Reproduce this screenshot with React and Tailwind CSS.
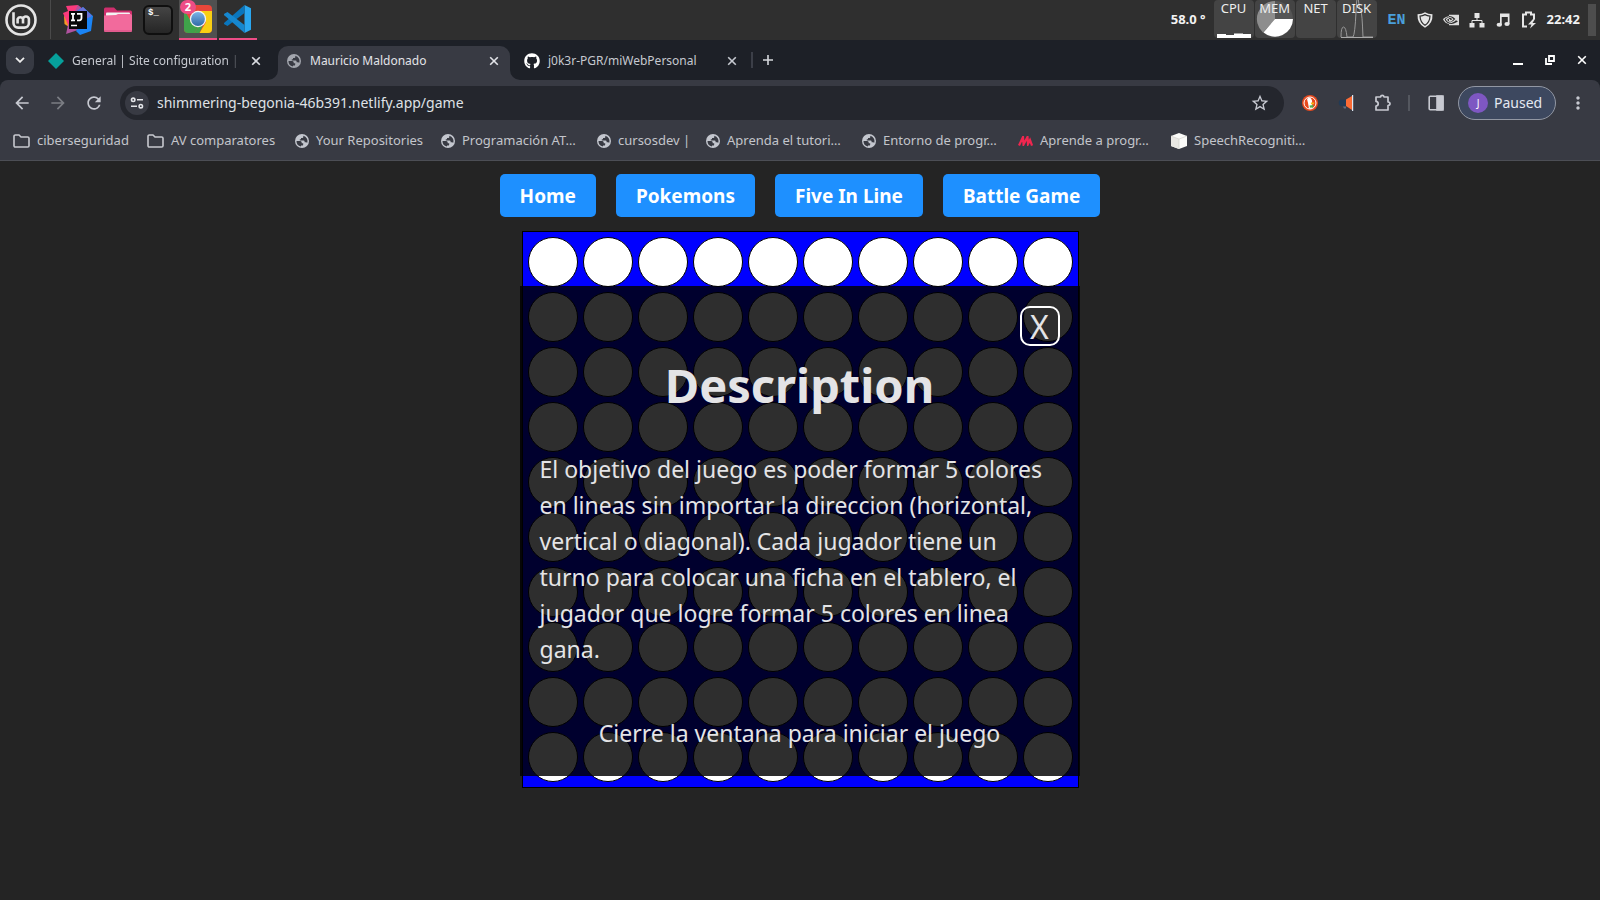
import { MdStarBorder, MdRefresh, MdArrowBack, MdArrowForward, MdMoreVert } from 'react-icons/md';
import { FaGithub } from 'react-icons/fa';
import { SiNvidia } from 'react-icons/si';

function MintLogo() {
  return (
    <svg viewBox="0 0 32 32" className="size-8" fill="none" stroke="#e4e4e4" strokeLinecap="butt">
      <circle cx="16" cy="16" r="14.5" strokeWidth="2.6" />
      <path d="M8.5 8.2V19a4.6 4.6 0 0 0 4.6 4.6h6.2a4.6 4.6 0 0 0 4.6-4.6v-4a3 3 0 0 0-5.9 0v4.6M18 15a3 3 0 0 0-5.4 0v4.6" strokeWidth="2.6" />
    </svg>
  );
}

function IntelliJLogo() {
  return (
    <svg viewBox="0 0 30 30" className="size-[30px]">
      <path d="M1 11 6 13 6 22 1.500 19z" fill="#f59a23" />
      <path d="M3 1 15 0 14 8 5 20 0 8 5 6z" fill="#fb3a7c" />
      <path d="M15 0 20 4 18 24 3 29 5 20 12 6z" fill="#b0529f" />
      <path d="M20 2 30 11 28 26 17 30 13 26 22 14 14 6z" fill="#1a84f5" />
      <path d="M20 2 14 7 23 14 29 11z" fill="#6b71d6" />
      <rect x="6" y="6" width="18" height="18" fill="#080808" />
      <path d="M8 8.800h4M10 8.800v6.500M8 15.300h4M14 8.800h4.500v4.300q0 2.200-2.200 2.200H14" stroke="#fff" strokeWidth="1.800" fill="none" />
      <path d="M8 20.500h6" stroke="#fff" strokeWidth="1.500" />
    </svg>
  );
}

function FilesLogo() {
  return (
    <svg viewBox="0 0 28 26" className="h-[26px] w-7">
      <path d="M0 2a1.500 1.500 0 0 1 1.500-1.500H10l3 3h13.500A1.500 1.500 0 0 1 28 5v9H0z" fill="#cf2f6d" />
      <rect x="2" y="5.500" width="24" height="4" rx="1" fill="#f4f4f4" />
      <path d="M0 8.500 12 8l2-1h12.500A1.500 1.500 0 0 1 28 8.500v15a1.500 1.500 0 0 1-1.500 1.500h-25A1.500 1.500 0 0 1 0 23.500z" fill="#f26a9c" />
      <path d="M0 24h28" stroke="#d14f80" strokeWidth="1" />
    </svg>
  );
}

function ChromeLogo() {
  return (
    <svg viewBox="0 0 30 30" className="size-[30px]">
      <defs>
        <clipPath id="chromeTile"><rect x="1" y="1" width="28" height="28" rx="4" /></clipPath>
        <linearGradient id="chromeCore" x1="0" y1="0" x2="0" y2="1">
          <stop offset="0" stopColor="#7db3e6" /><stop offset="1" stopColor="#2f6aa8" />
        </linearGradient>
      </defs>
      <g clipPath="url(#chromeTile)">
        <rect width="30" height="30" fill="#e8473a" />
        <path d="M0 4 9 19 15 23 11 30H0z" fill="#3fa34a" />
        <path d="M15 7h15v23H16l7-12z" fill="#f9cf13" />
        <path d="M11 30 15 23 20 21 16 30z" fill="#3fa34a" />
      </g>
      <circle cx="15" cy="15" r="8.200" fill="#f4f4f4" />
      <circle cx="15" cy="15" r="6.900" fill="url(#chromeCore)" />
    </svg>
  );
}

function CodeLogo() {
  return (
    <svg viewBox="0 0 28 28" className="size-7">
      <path d="M20.500 0 27 3.200v21.600L20.500 28z" fill="#2aa7f0" />
      <path d="M20.500 0v8L3.500 21 .3 19.300q-.7-.8 0-1.600z" fill="#0a76bd" />
      <path d="M20.500 28v-8L3.500 7 .3 8.700q-.7.800 0 1.600z" fill="#1687cf" />
    </svg>
  );
}

function TerminalLogo() {
  return (
    <span className="flex size-[30px] rounded-md border-2 border-[#0f0f0f] bg-linear-to-b from-[#454545] to-[#262626] pl-[3px] font-mono text-[9px] leading-[13px] font-bold text-white">
      $_
    </span>
  );
}

function ShieldIcon() {
  return (
    <svg viewBox="0 0 16 16" className="size-4" fill="none">
      <path d="M8 .3q3 1.800 7.500 2Q16 12 8 15.700 0 12 .5 2.300q4.500-.2 7.500-2z" fill="#e6e6e6" />
      <path d="M8 2.600q2.300 1.200 5 1.500-.2 6.400-5 9.200Q3.200 10.500 3 4.100q2.700-.3 5-1.500z" stroke="#2f2f2f" strokeWidth="1.200" />
    </svg>
  );
}

function NetworkIcon() {
  return (
    <svg viewBox="0 0 16 16" className="size-4" fill="#e6e6e6">
      <path d="M5.500 1h5v5h-5zM.500 11h5v4.500h-5zM10.500 11h5v4.500h-5z" />
      <path d="M8 5v3.500M3 12V8.500h10V12" stroke="#e6e6e6" fill="none" />
    </svg>
  );
}

function MusicIcon() {
  return (
    <svg viewBox="0 0 16 16" className="size-4" fill="#e6e6e6">
      <path d="M5 1.500h9.500V12h-1.700V5H6.700v8H5z" />
      <ellipse cx="4.300" cy="12.800" rx="2.700" ry="2" />
      <ellipse cx="12" cy="12" rx="2.600" ry="2" />
    </svg>
  );
}

function BatteryIcon() {
  return (
    <svg viewBox="0 0 16 18" className="h-[18px] w-4" fill="none">
      <path d="M6 15.500H2V3.500h3V1.500h5v2h3V8" stroke="#e6e6e6" strokeWidth="2" />
      <path d="M12 8 7 13.500h3.500L9 17.500l6-5.500h-3.500L14 8z" fill="#e6e6e6" />
    </svg>
  );
}

function Cross({ className }) {
  return (
    <svg viewBox="0 0 10 10" className={className} stroke="currentColor" strokeWidth="1.600">
      <path d="M1.200 1.200l7.600 7.600M8.800 1.200 1.200 8.800" />
    </svg>
  );
}

function FolderIcon() {
  return (
    <svg viewBox="0 0 17 14" className="h-3.5 w-[17px] shrink-0" fill="none" stroke="#c7c9cf" strokeWidth="1.600">
      <path d="M1 2.300A1.300 1.300 0 0 1 2.300 1H6l2 2h6.700A1.300 1.300 0 0 1 16 4.300v7.400a1.300 1.300 0 0 1-1.300 1.300H2.300A1.300 1.300 0 0 1 1 11.700z" />
    </svg>
  );
}

function GlobeIcon({ color }) {
  return (
    <svg viewBox="0 0 14 14" className="size-3.5 shrink-0">
      <circle cx="7" cy="7" r="7" fill={color} />
      <path d="M1.500 7h3.700q1.500 0 1.500 1.500v.7h1.500v1.200q0 1.200-1.500 1.200H6v.9A5.500 5.500 0 0 1 1.500 7z" fill="#383a43" />
      <path d="M8.300 1.700V3q0 1-1 1H6v1.200H4.800V6.500h3.800q1 0 1 1v.8h1.500q.8 0 1 .7A5.500 5.500 0 0 0 8.300 1.700z" fill="#383a43" />
    </svg>
  );
}

const Globe = () => <GlobeIcon color="#c3c6ce" />;

function MoureIcon() {
  return (
    <svg viewBox="0 0 15 10" className="h-2.5 w-[15px] shrink-0" fill="none" stroke="#f0264f" strokeWidth="2.200">
      <path d="M1 9.500 5 1l.5 7.500L9.500 1l.5 7L12 4l2 5.500" />
    </svg>
  );
}

function CubeIcon() {
  return (
    <svg viewBox="0 0 16 16" className="size-4 shrink-0">
      <path d="M8 0 16 3v10l-8 3-8-3V3z" fill="#fbfbf9" />
      <path d="M8 6v10l-8-3V3z" fill="#e9e8e4" />
      <path d="M0 3l8 3 8-3M8 6v10" stroke="#cfcdc8" strokeWidth=".6" fill="none" />
    </svg>
  );
}

const bookmarks = [
  { label: 'ciberseguridad', icon: FolderIcon, width: 'w-[134px]' },
  { label: 'AV comparatores', icon: FolderIcon, width: 'w-[148px]' },
  { label: 'Your Repositories', icon: Globe, width: 'w-[146px]' },
  { label: 'Programación AT…', icon: Globe, width: 'w-[156px]' },
  { label: 'cursosdev |', icon: Globe, width: 'w-[109px]' },
  { label: 'Aprenda el tutori…', icon: Globe, width: 'w-[156px]' },
  { label: 'Entorno de progr…', icon: Globe, width: 'w-[156px]' },
  { label: 'Aprende a progr…', icon: MoureIcon, width: 'w-[153px]' },
  { label: 'SpeechRecogniti…', icon: CubeIcon, width: 'w-[140px]' },
];

function Monitor({ label, children }) {
  return (
    <div className="relative flex h-[38px] w-10 justify-center rounded-sm bg-[#444444]">
      <svg viewBox="0 0 40 38" className="absolute inset-0 h-[38px] w-10">{children}</svg>
      <span className="relative text-[13px] leading-4 text-[#eeeeee]">{label}</span>
    </div>
  );
}

function Taskbar() {
  return (
    <header className="flex h-10 items-stretch bg-[#2f2f2f] font-['Noto_Sans',sans-serif]">
      <button aria-label="Menu" className="ml-[5px] flex items-center"><MintLogo /></button>
      <div className="mb-px ml-[13px] w-px bg-[#4a4a4a]" />
      <div className="ml-2 flex gap-0.5">
        <button aria-label="IntelliJ IDEA" className="flex w-[38px] items-center justify-center"><IntelliJLogo /></button>
        <button aria-label="Files" className="flex w-[38px] items-center justify-center"><FilesLogo /></button>
        <button aria-label="Terminal" className="flex w-[38px] items-center justify-center"><TerminalLogo /></button>
        <button aria-label="Chrome" className="relative flex w-[38px] items-center justify-center border-b-2 border-[#ee4d86] bg-[#505050]">
          <ChromeLogo />
          <span className="absolute top-0 left-px h-3.5 w-4 rounded-full bg-[#ee4d86] text-center text-[11px] leading-3.5 font-bold text-white">2</span>
        </button>
        <button aria-label="Code" className="flex w-[38px] items-center justify-center border-b-2 border-[#ee4d86]"><CodeLogo /></button>
      </div>
      <div className="ml-auto flex items-center">
        <span className="mr-2 text-[13px] font-bold text-[#f2f2f2]">58.0 °</span>
        <div className="flex gap-px self-start">
          <Monitor label="CPU"><path d="M3 34h9v1h8v-1.500h9V34h8v4H3z" fill="#fff" /></Monitor>
          <Monitor label="MEM">
            <circle cx="20" cy="19" r="18" fill="#555" />
            <path d="M20 19V1A18 18 0 0 0 8 32.500z" fill="#8d8d8d" />
            <path d="M20 19H38A18 18 0 0 1 8.500 32.500z" fill="#fff" />
          </Monitor>
          <Monitor label="NET" />
          <Monitor label="DISK">
            <path d="M4 37Q4 27 6.500 27T10 37h6Q18 34 19 12T21.500 1 24 12 26 37h10" fill="none" stroke="#999" />
            <path d="M4 38h32" stroke="#aaa" strokeWidth="2" />
          </Monitor>
        </div>
        <span className="mx-[11px] pt-0.5 font-['Liberation_Mono',monospace] text-[15px] font-bold text-[#4a9fdb]">EN</span>
        <div className="flex items-center gap-2.5">
          <ShieldIcon />
          <SiNvidia className="size-4 text-[#dcdcdc]" />
          <NetworkIcon />
          <MusicIcon />
          <BatteryIcon />
        </div>
        <time className="ml-2.5 text-[13px] font-bold text-[#f2f2f2]">22:42</time>
        <div className="mr-1 ml-2 h-8 w-2 bg-[#4d4d4d]" />
      </div>
    </header>
  );
}

function TabStrip() {
  return (
    <div className="flex h-10 items-end bg-[#1d2027] text-[12px] text-[#c6c9d0]">
      <button aria-label="Search tabs" className="mb-1.5 ml-1.5 flex size-7 shrink-0 items-center justify-center rounded-[9px] bg-[#373a43]">
        <svg viewBox="0 0 10 6" className="h-1.5 w-2.5" fill="none" stroke="#eee" strokeWidth="1.800"><path d="M1 .8 5 4.800 9 .8" /></svg>
      </button>
      <div className="flex h-[34px] w-[244px] items-center pt-1 pb-2 pl-3.5">
        <svg viewBox="0 0 16 16" className="size-4 shrink-0"><path d="M8 0l8 8-8 8-8-8z" fill="#06a09b" /></svg>
        <span className="ml-2 w-[168px] mask-r-from-92% whitespace-nowrap">General | Site configuration |</span>
        <button aria-label="Close tab" className="ml-[11px]"><Cross className="size-2.5 text-[#d8dae0]" /></button>
      </div>
      <div className="relative flex h-[34px] w-[232px] items-center rounded-t-[10px] bg-[#383a43] pt-1 pb-2 pl-[9px] text-[#e2e3e8]">
        <svg viewBox="0 0 10 10" className="absolute bottom-0 -left-2.5 size-2.5" fill="#383a43"><path d="M10 0v10H0A10 10 0 0 0 10 0z" /></svg>
        <svg viewBox="0 0 10 10" className="absolute -right-2.5 bottom-0 size-2.5" fill="#383a43"><path d="M0 0v10h10A10 10 0 0 1 0 0z" /></svg>
        <GlobeIcon color="#a3a6ae" />
        <span className="ml-[9px] w-[179px] whitespace-nowrap">Mauricio Maldonado</span>
        <button aria-label="Close tab"><Cross className="size-2.5" /></button>
      </div>
      <div className="flex h-[34px] w-[241px] items-center pt-1 pb-2 pl-3.5">
        <FaGithub className="size-4 shrink-0 text-white" />
        <span className="ml-2 w-[179px] whitespace-nowrap">j0k3r-PGR/miWebPersonal</span>
        <button aria-label="Close tab"><Cross className="size-2.5" /></button>
      </div>
      <div className="mb-3 h-4 w-0.5 bg-[#3c3f48]" />
      <button aria-label="New tab" className="mb-[15px] ml-2.5">
        <svg viewBox="0 0 10 10" className="size-2.5" stroke="#d5d7dc" strokeWidth="1.600"><path d="M5 0v10M0 5h10" /></svg>
      </button>
      <div className="mr-[13px] mb-[15px] ml-auto flex items-center gap-[22px] text-white">
        <button aria-label="Minimize"><svg viewBox="0 0 10 10" className="size-2.5"><path d="M0 8h10v2H0z" fill="#fff" /></svg></button>
        <button aria-label="Restore"><svg viewBox="0 0 10 10" className="size-2.5" fill="none" stroke="#fff" strokeWidth="1.800"><path d="M4 1h5v5H4zM1 3v6h6" /></svg></button>
        <button aria-label="Close window"><Cross className="size-2.5" /></button>
      </div>
    </div>
  );
}

function Toolbar() {
  return (
    <div className="flex h-[46px] items-center rounded-t-lg bg-[#383a43] text-[#c7c9d1]">
      <div className="ml-3 flex gap-4">
        <button aria-label="Back"><MdArrowBack className="size-5" /></button>
        <button aria-label="Forward"><MdArrowForward className="size-5 text-[#7b7d84]" /></button>
        <button aria-label="Reload"><MdRefresh className="size-5" /></button>
      </div>
      <div className="ml-4 flex h-[34px] flex-1 items-center rounded-full bg-[#24262d] pl-[5px] pr-3.5">
        <button aria-label="Site information" className="flex size-6 items-center justify-center rounded-full bg-[#383a43]">
          <svg viewBox="0 0 14 12" className="h-3 w-3.5" fill="none" stroke="#e3e4e8" strokeWidth="1.600">
            <circle cx="3.200" cy="2.800" r="1.700" /><path d="M7 2.800h6M1 9.200h6" /><circle cx="10.800" cy="9.200" r="1.700" />
          </svg>
        </button>
        <input aria-label="Address" className="ml-2 min-w-0 flex-1 bg-transparent pb-0.5 text-[14px] text-[#dfe1e6] outline-none" defaultValue="shimmering-begonia-46b391.netlify.app/game" />
        <button aria-label="Bookmark this page"><MdStarBorder className="size-5" /></button>
      </div>
      <div className="ml-[18px] flex items-center gap-5">
        <button aria-label="DuckDuckGo">
          <svg viewBox="0 0 16 16" className="size-4">
            <circle cx="8" cy="8" r="8" fill="#e8491d" /><circle cx="8" cy="8" r="6" fill="none" stroke="#fff" strokeWidth="1" />
            <path d="M5 4q2.500-2.500 4.500.2Q10.500 6 10 8l.5 5.200q-2 .8-3.500.2Q6.200 8 5 4z" fill="#fff" />
            <path d="M8.800 7.500h3.700l-.8 1.800H9z" fill="#f9b816" /><path d="M7.500 10.500l4-.4-.5 2.500-3 .2z" fill="#4caf50" />
          </svg>
        </button>
        <button aria-label="Volume booster">
          <svg viewBox="0 0 16 16" className="size-4">
            <path d="M4 4.500H9v6.500H4a3.250 3.250 0 0 1 0-6.500z" fill="#223a55" /><path d="M5 11.500h3v2H6z" fill="#5d6f86" />
            <path d="M8 4.500 14 1v14L8 11z" fill="#fb6b35" /><path d="M14 0h1.200v16H14z" fill="#dce6f2" />
          </svg>
        </button>
        <button aria-label="Extensions">
          <svg viewBox="0 0 18 18" className="size-[18px]" fill="none" stroke="#c7c9d1" strokeWidth="1.700" strokeLinejoin="round">
            <path d="M2 3h4.500q.3-1.700 1.800-1.700T10 3h4v5q2 .2 2 1.800T14 11.500V16H2v-4q2.200-.3 2.200-2.300T2 7.400z" />
          </svg>
        </button>
      </div>
      <div className="ml-4 h-4 w-0.5 bg-[#54575f]" />
      <button aria-label="Side panel" className="ml-[18px]">
        <svg viewBox="0 0 16 16" className="size-4" fill="none" stroke="#c7c9d1" strokeWidth="1.600"><rect x="1.200" y="1.200" width="13.600" height="13.600" rx="1" /><path d="M9 1h6v14H9z" fill="#c7c9d1" /></svg>
      </button>
      <button className="ml-3.5 flex h-[34px] w-[98px] items-center rounded-full border border-[#9297a3] bg-[#3d485f] pl-[9px] text-[14px] text-[#e4e8f2]">
        <span className="flex size-5 items-center justify-center rounded-full bg-[#7e57c2] text-[10px] text-white">J</span>
        <span className="ml-1.5 pb-px">Paused</span>
      </button>
      <button aria-label="More" className="mx-3"><MdMoreVert className="size-5" /></button>
    </div>
  );
}

function Bookmarks() {
  return (
    <nav aria-label="Bookmarks" className="flex h-[35px] items-center overflow-hidden border-b border-[#4c4e55] bg-[#383a43] pb-1 pl-[13px] text-[13px] text-[#c3c5cb]">
      {bookmarks.map(({ label, icon: Icon, width }) => (
        <a key={label} href="#" className={`flex shrink-0 items-center gap-[7px] whitespace-nowrap ${width}`}>
          <Icon />
          {label}
        </a>
      ))}
    </nav>
  );
}

const cells = Array.from({ length: 100 }, (_, i) => i);

function Game() {
  return (
    <main className="flex flex-1 flex-col items-center bg-[#242424] pt-[13px] font-['Noto_Sans',sans-serif]">
      <nav aria-label="Main" className="flex gap-5">
        {['Home', 'Pokemons', 'Five In Line', 'Battle Game'].map((label) => (
          <a key={label} href="#" className="rounded-[5px] bg-[#1e90ff] px-5 pt-[9px] pb-[7px] text-[19px] leading-[27px] font-bold text-white">
            {label}
          </a>
        ))}
      </nav>
      <div className="relative mt-3.5 grid grid-cols-10 gap-[5px] border border-black bg-[#0000ff] p-[5px]">
        {cells.map((i) => (
          <div key={i} className="size-[50px] rounded-full border border-black bg-white" />
        ))}
        <section role="dialog" aria-labelledby="dialog-title" className="absolute top-[54px] -right-0.5 -left-[3px] h-[490px] bg-black/82 px-5 pt-5 text-[23px] leading-9 text-[#e4e4e6]">
          <div className="flex justify-end">
            <button aria-label="Close" className="flex size-10 items-center justify-center rounded-[10px] border-2 border-white pt-0.5 text-[32px] leading-none">X</button>
          </div>
          <h2 id="dialog-title" className="mt-[3px] text-center text-[47px] leading-[72px] font-bold">Description</h2>
          <p className="mt-[30px]">
            El objetivo del juego es poder formar 5 colores en lineas sin importar la direccion (horizontal, vertical o diagonal). Cada jugador tiene un turno para colocar una ficha en el tablero, el jugador que logre formar 5 colores en linea gana.
          </p>
          <p className="mt-12 text-center">Cierre la ventana para iniciar el juego</p>
        </section>
      </div>
    </main>
  );
}

export default function App() {
  return (
    <div className="flex min-h-screen flex-col bg-[#242424]">
      <Taskbar />
      <div className="bg-[#1d2027] font-['Noto_Sans',sans-serif]">
        <TabStrip />
        <Toolbar />
        <Bookmarks />
      </div>
      <Game />
    </div>
  );
}
